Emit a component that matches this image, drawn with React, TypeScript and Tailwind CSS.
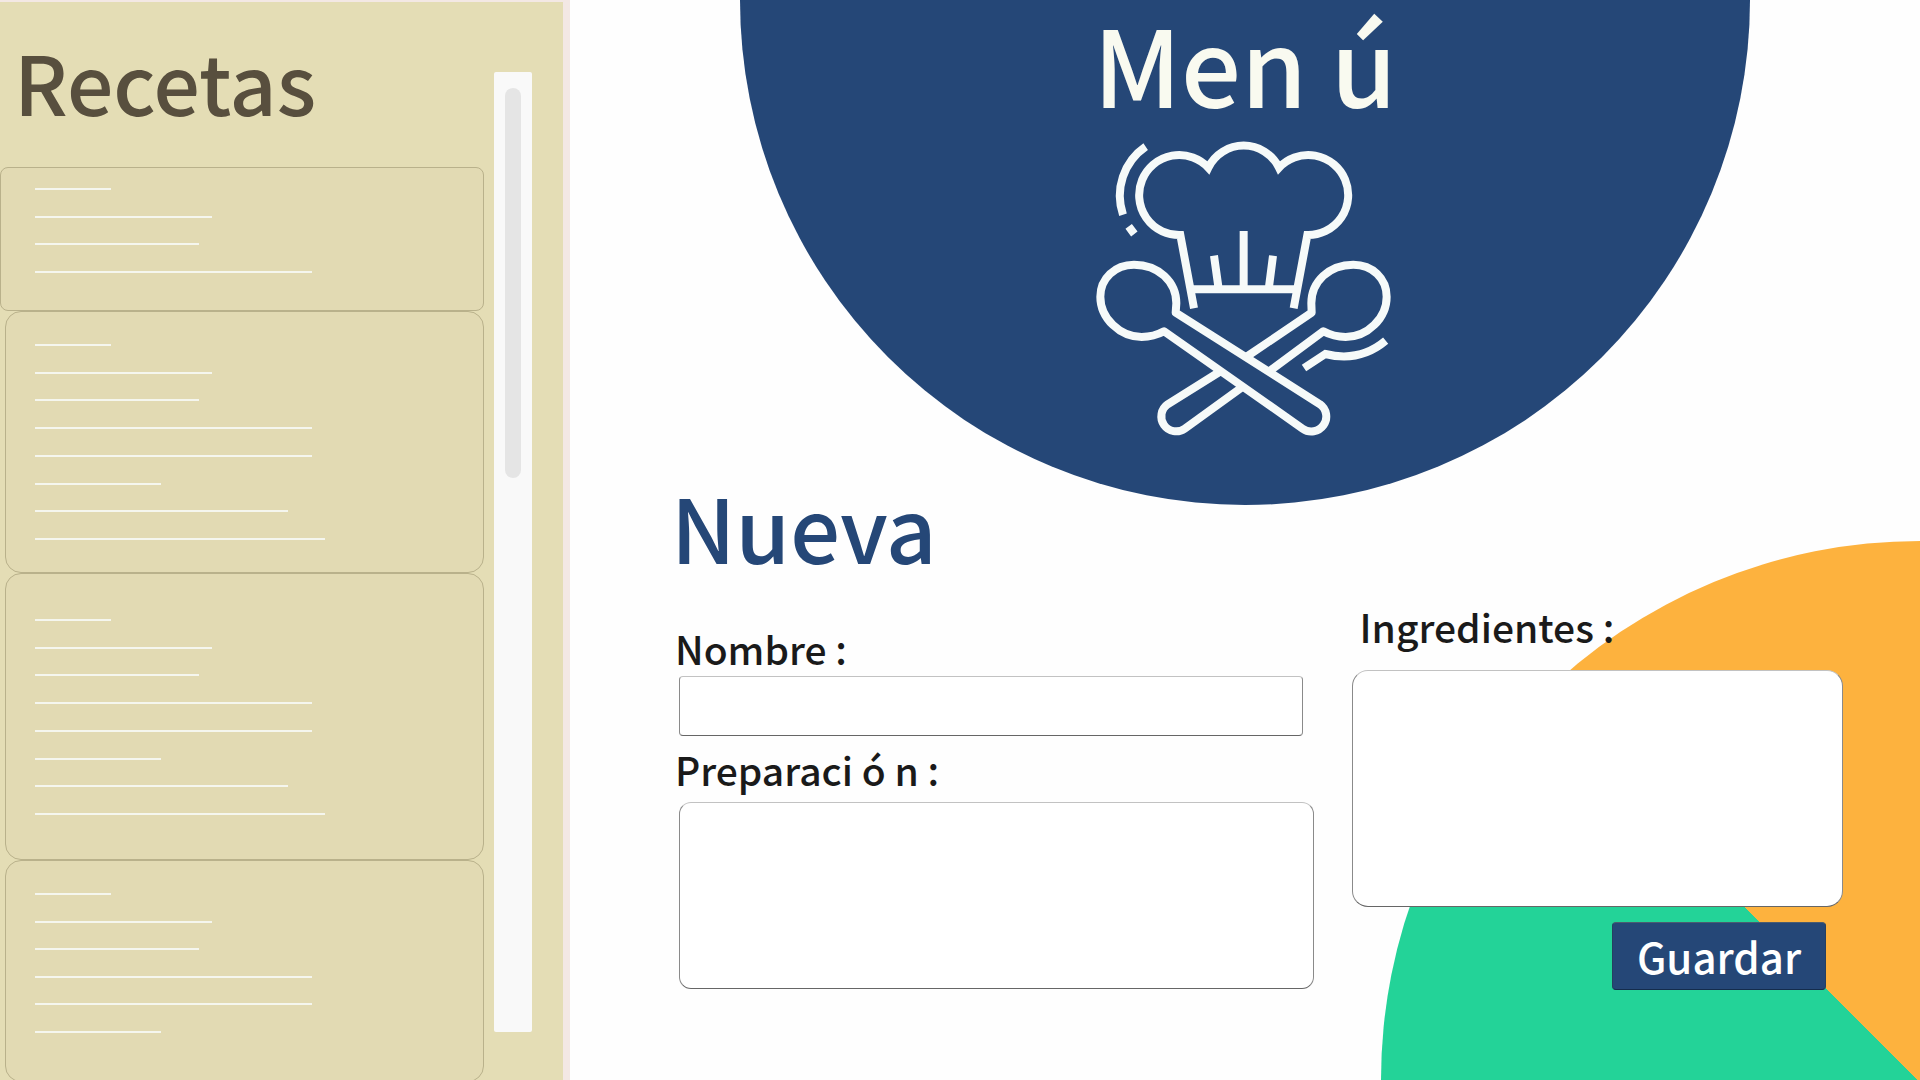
const FULL_RECIPE = [76, 177, 164, 277, 277, 126, 253, 290];

function RecipeCard({ lines, className, listClass }: { lines: number[]; className: string; listClass: string }) {
  return (
    <li className={`shrink-0 border border-[#b9b18b] bg-[#e2dab3] ${className}`}>
      <div className={`flex flex-col justify-between ${listClass}`}>
        {lines.map((width, i) => (
          <span key={i} className="block h-[2px] bg-[#f5f6ee]" style={{ width }} />
        ))}
      </div>
    </li>
  );
}

function ChefLogo() {
  return (
    <svg
      viewBox="0 0 990 960"
      className="h-80 w-[330px]"
      fill="none"
      stroke="#f6faf9"
      strokeWidth="24"
      aria-hidden="true"
    >
      <path d="M342 535 L301 315 A120 120 0 1 1 385 113 A118 118 0 0 1 597 113 A120 120 0 1 1 682 315 L641 535" />
      <path d="M335 478 H648 M491 303 V478 M402 377 L415 470 M579 377 L567 470" />
      <path d="M197 50 A178 178 0 0 0 129 254 M146 289 L163 312" />
      <path
        strokeLinejoin="round"
        d="M287 548 L289 520 C289 455 235 404 162 404 C105 404 61 445 61 500 C61 565 120 621 185 621 C212 621 232 615 252 604 L668 896 A44 44 0 0 0 720 823 Z"
      />
      <path
        strokeLinejoin="round"
        d="M500 680 L695 548 L694 520 C694 455 747 404 820 404 C877 404 920 445 920 500 C920 565 862 621 797 621 C770 621 750 615 730 604 L566 725"
      />
      <path d="M418 726 L263 823 A44 44 0 0 0 314 896 L486 772" />
      <path d="M672 714 L736 672 C800 688 860 680 917 632" />
    </svg>
  );
}

const field =
  "block w-full resize-none border border-x-[#8a8a8a] border-t-[#c2c2c2] border-b-[#666666] bg-white px-4 text-3xl text-[#1a1a1a] outline-none";
const label = "block text-[39px] leading-[48px] font-medium text-[#1a1a1a]";

export default function App() {
  return (
    <div className="flex h-screen overflow-hidden bg-[#fefefe] font-['Noto_Sans_CJK_SC',sans-serif]">
      <aside className="flex w-[570px] shrink-0 border-t-2 border-r-7 border-[#f3e8e4] bg-[#e4ddb5]">
        <div className="flex w-[484px] flex-col">
          <h2 className="pt-6 pl-[14px] text-[82px] leading-[110px] font-medium text-[#584f3e]">Recetas</h2>
          <ul className="mt-[31px] flex flex-col">
            <RecipeCard lines={[76, 177, 164, 277]} className="h-36 rounded-lg pt-5 pl-[34px]" listClass="h-[85px]" />
            <RecipeCard lines={FULL_RECIPE} className="ml-[5px] h-[262px] rounded-2xl pt-8 pl-[29px]" listClass="h-[196px]" />
            <RecipeCard lines={FULL_RECIPE} className="ml-[5px] h-[287px] rounded-2xl pt-[45px] pl-[29px]" listClass="h-[196px]" />
            <RecipeCard lines={FULL_RECIPE.slice(0, 6)} className="ml-[5px] h-[222px] rounded-2xl pt-8 pl-[29px]" listClass="h-[140px]" />
          </ul>
        </div>
        <div className="mt-[70px] ml-[10px] h-[960px] w-[38px] rounded-[2px] bg-[#f9f9f9] px-[11px] pt-4">
          <div className="h-[390px] rounded-lg bg-[#e5e5e5]" />
        </div>
      </aside>

      <main className="relative flex-1 overflow-hidden">
        <div className="absolute right-0 bottom-0 size-[539px] rounded-tl-full bg-[linear-gradient(to_top_right,#23d398_calc(50%-2px),#fdb23e_calc(50%-2px))]" />

        <header className="mx-auto flex h-[505px] w-[1010px] flex-col items-center rounded-b-full bg-[#254777]">
          <h1 className="pt-[2px] pb-2 text-[106px] leading-[120px] font-medium text-[#f9faf0]">Men ú</h1>
          <ChefLogo />
        </header>

        <form className="relative -mt-[39px] pr-[77px] pl-[109px]" onSubmit={(e) => e.preventDefault()}>
          <h2 className="-ml-2 text-[88px] leading-[120px] font-medium text-[#254777]">Nueva</h2>
          <div className="grid grid-cols-[634fr_491fr] gap-[38px]">
            <div className="pt-[38px]">
              <label htmlFor="nombre" className={`-ml-1 ${label}`}>Nombre :</label>
              <div className="pt-1 pr-[11px]">
                <input id="nombre" type="text" className={`h-[60px] rounded-sm ${field}`} />
              </div>
              <label htmlFor="preparacion" className={`-ml-1 pt-[9px] ${label}`}>Preparaci ó n :</label>
              <textarea id="preparacion" className={`mt-[9px] h-[187px] rounded-xl ${field}`} />
            </div>
            <div className="pt-4">
              <label htmlFor="ingredientes" className={`pl-2 ${label}`}>Ingredientes :</label>
              <textarea id="ingredientes" className={`mt-5 h-[237px] rounded-2xl ${field}`} />
              <div className="mt-[15px] flex justify-end pr-[17px]">
                <button
                  type="submit"
                  className="h-[68px] w-[214px] rounded-sm border border-x-[#274060] border-t-[#4b5c70] border-b-[#142c4c] bg-[#254777] text-[42px] leading-[64px] font-medium text-white"
                >
                  Guardar
                </button>
              </div>
            </div>
          </div>
        </form>
      </main>
    </div>
  );
}
